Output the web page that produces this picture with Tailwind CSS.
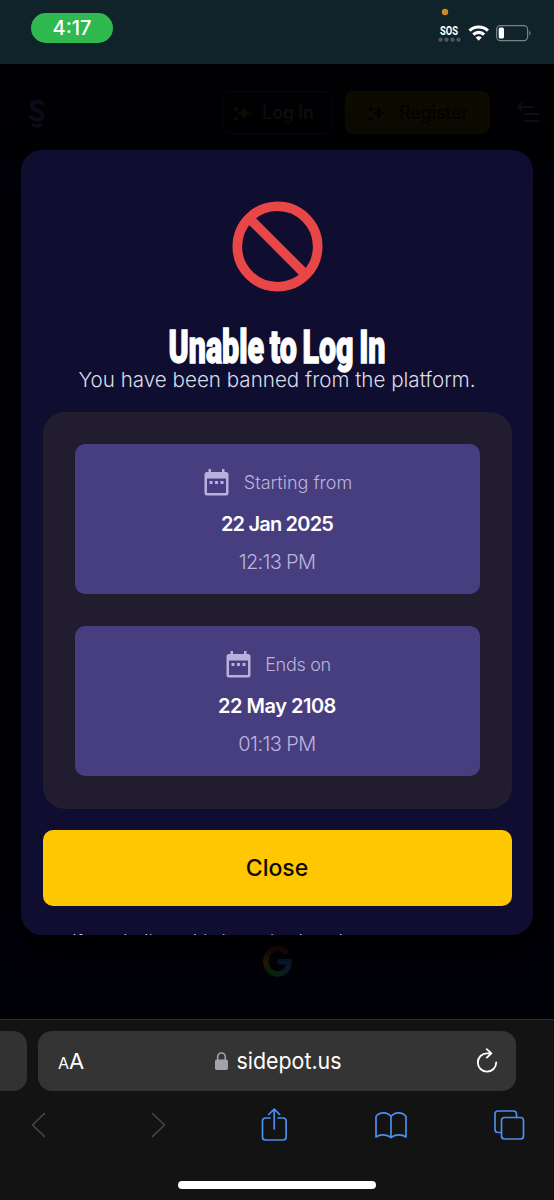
<!DOCTYPE html>
<html lang="en">
<head>
<meta charset="utf-8">
<title>Unable to Log In</title>
<script src="https://cdn.jsdelivr.net/npm/@tailwindcss/browser@4"></script>
</head>
<body class="bg-black font-['Inter',sans-serif]">
<div class="relative flex h-[1200px] w-[554px] flex-col overflow-hidden bg-[#010108]">

  <!-- Status bar -->
  <div class="flex h-16 shrink-0 items-start justify-between bg-[#11232a] pl-[31px] pr-[22px]">
    <div class="mt-[13px] flex h-[30px] w-[82px] items-center justify-center rounded-full bg-[#2fb94f] text-[20px] font-medium text-white">4:17</div>
    <svg class="mt-[6px] h-9 w-[95px]" viewBox="437 6 95 36" fill="none">
      <circle cx="445" cy="12" r="3.2" fill="#cf8a25"/>
      <text x="440" y="35" textLength="18" lengthAdjust="spacingAndGlyphs" font-family="Roboto, sans-serif" font-weight="700" font-size="12.5" fill="#fff">SOS</text>
      <g fill="#4b5a60"><circle cx="440.5" cy="39.7" r="2.1"/><circle cx="446.5" cy="39.7" r="2.1"/><circle cx="452.5" cy="39.7" r="2.1"/><circle cx="458.5" cy="39.7" r="2.1"/></g>
      <g stroke="#fff" stroke-width="3.2"><path d="M469.5 30.7a13.3 13.3 0 0 1 18.400 0"/><path d="M473.300 34.600a7.700 7.700 0 0 1 10.800 0"/></g>
      <path d="M478.700 40.800l-3-3.200a4.400 4.400 0 0 1 6 0z" fill="#fff"/>
      <rect x="496.600" y="25.600" width="31" height="15" rx="3.800" stroke="#76838a" stroke-width="1.200"/>
      <rect x="498.700" y="27.600" width="5.300" height="11" rx="1.700" fill="#fff"/>
      <path d="M529.300 30.700c1.800.8 1.800 4 0 4.800z" fill="#76838a"/>
    </svg>
  </div>

  <!-- Dimmed site header -->
  <div class="flex h-24 shrink-0 items-start bg-[#010103] pt-[27px] font-medium">
    <svg class="ml-[28px] mt-[6px] h-[32px] w-[18px]" viewBox="0 0 18 32" fill="none" stroke="#0c0b18" stroke-width="4"><path d="M15 8.500C14 3 4 3 4 8.500c0 6 10.500 4 10.500 10 0 6-10.500 6-11.500 0M4 27c3 2.500 7 2.500 10 0"/></svg>
    <div class="ml-[176px] flex h-[43px] w-[111px] items-center rounded-lg border border-[#090909] pl-[9px] text-[18px] tracking-[-0.2px] text-[#0e0e0d]">
      <svg class="mr-[10px] h-5 w-5" viewBox="0 0 20 20" fill="#0e0d02"><path d="M12 3l2 5 5 2-5 2-2 5-2-5-5-2 5-2zM4 3l1 2 2 1-2 1-1 2-1-2-2-1 2-1zM4 13l1 2 2 1-2 1-1 2-1-2-2-1 2-1z"/></svg>Log In
    </div>
    <div class="ml-[12px] flex h-[43px] w-[145px] items-center rounded-lg bg-[#0d0a00] pl-[22px] text-[18px] tracking-[-0.2px] text-[#020200]">
      <svg class="mr-[12px] h-5 w-5" viewBox="0 0 20 20" fill="#020200"><path d="M12 3l2 5 5 2-5 2-2 5-2-5-5-2 5-2zM4 3l1 2 2 1-2 1-1 2-1-2-2-1 2-1zM4 13l1 2 2 1-2 1-1 2-1-2-2-1 2-1z"/></svg>Register
    </div>
    <svg class="ml-[26px] mt-[10px] h-[24px] w-[24px]" viewBox="0 0 24 24" fill="none" stroke="#0e0e12" stroke-width="2"><path d="M2 6h16M6 2L2 6l4 4M8 13h15M8 20h15"/></svg>
  </div>

  <div class="flex flex-1 items-start justify-center">
    <svg class="mt-[786px] h-[31px] w-[29px]" viewBox="0 0 29 31" fill="none" stroke-width="5.600"><path d="M24 7.300A11.600 12.300 0 0 0 4 10" stroke="#2a100c"/><path d="M4.500 9.300a12 12.500 0 0 0 0 12.400" stroke="#2a2104"/><path d="M4 20.600a11.600 12.300 0 0 0 17.500 5" stroke="#0c2611"/><path d="M21 26a12 12 0 0 0 5-10.200H14.500" stroke="#0d1d33"/></svg>
  </div>

  <!-- Browser chrome -->
  <div class="flex h-[181px] shrink-0 flex-col border-t border-[#2b2b2c] bg-[#131313]">
    <div class="mt-[11px] flex h-[60px] shrink-0 gap-[11px]">
      <div class="w-[27px] rounded-r-[14px] bg-[#323233]"></div>
      <div class="flex w-[478px] items-center rounded-[14px] bg-[#343435] text-white">
        <div class="ml-[20px] flex w-[157px] items-baseline"><span class="text-[16px]">A</span><span class="text-[22px]">A</span></div>
        <svg class="h-[18px] w-[13px]" viewBox="0 0 13 18"><rect y="7.500" width="13" height="10.500" rx="1.800" fill="#a3a1ab"/><path d="M2.700 8V4.800a3.800 3.800 0 0 1 7.600 0V8" fill="none" stroke="#a3a1ab" stroke-width="1.600"/></svg>
        <svg class="ml-[8px] h-[30px] w-[110px]" viewBox="0 0 110 30"><text x="0.500" y="22.500" textLength="105" lengthAdjust="spacingAndGlyphs" font-size="22.500" fill="#fff">sidepot.us</text></svg>
        <svg class="ml-[130px] h-[26px] w-[22px]" viewBox="0 0 22 26" fill="none" stroke="#fff" stroke-width="1.800" stroke-linecap="round" stroke-linejoin="round"><path d="M20.200 14.500a9.200 9.200 0 1 1-9.200-9.200h4M10.800 1.200l4.600 4.200-4.600 4.200"/></svg>
      </div>
    </div>
    <svg class="h-[60px] w-[554px] shrink-0" viewBox="0 1091 554 60" fill="none" stroke-width="1.700" stroke-linecap="round" stroke-linejoin="round">
      <g stroke="#464646"><path d="M44.500 1113.500L32.500 1125l12 11.500M152.500 1113.500l12 11.500-12 11.500"/></g>
      <g stroke="#4a8ff0"><path d="M270 1118h-4.500a3 3 0 0 0-3 3v16a3 3 0 0 0 3 3h17.600a3 3 0 0 0 3-3v-16a3 3 0 0 0-3-3H278M274.200 1129v-19.500M268.700 1114.500l5.500-5.400 5.500 5.400"/>
      <path d="M391 1116.500c-4-5-11.500-4.500-15 0V1137c4-3 11-3 15 0.500 4-3.500 11-3.500 15-.5v-20.500c-3.500-4.500-11-5-15 0zV1137"/>
      <rect x="501.500" y="1117.500" width="22" height="21.500" rx="3"/><path d="M501.500 1132.500h-3.500a3 3 0 0 1-3-3V1114a3 3 0 0 1 3-3h15.500a3 3 0 0 1 3 3v3.500"/></g>
    </svg>
    <div class="mx-auto mt-[30px] h-[8px] w-[198px] shrink-0 rounded-full bg-white"></div>
  </div>

  <!-- Ban dialog, over the dimmed page -->
  <div class="absolute left-[21px] top-[150px] flex h-[785px] w-[512px] flex-col items-center overflow-hidden rounded-[21px] bg-[#0f0e30] px-[21px] shadow-[0_16px_40px_#000]">
    <svg class="mt-[51px] h-[91px] w-[91px] shrink-0" viewBox="0 0 91 91" fill="none" stroke="#e94648" stroke-width="9.600"><circle cx="45.500" cy="45.500" r="40.200"/><path d="M17 17l57 57"/></svg>
    <svg class="mt-[32px] h-[46px] w-[222px] shrink-0 overflow-visible" viewBox="166 324 222 46"><text x="168.500" y="362.500" textLength="217" lengthAdjust="spacingAndGlyphs" word-spacing="-3" font-family="Roboto, sans-serif" font-weight="900" font-size="46" fill="#fff" stroke="#fff" stroke-width="1.400" stroke-linejoin="miter">Unable to Log In</text></svg>
    <p class="-mt-[4px] text-center text-[20.600px] leading-[28px] font-light whitespace-nowrap text-[#dcdce8]">You have been banned from the platform.</p>
    <div class="mt-[18px] flex h-[397px] w-[469px] shrink-0 flex-col gap-8 rounded-[22px] bg-[#211c2e] p-8">
      <div class="flex h-[150px] flex-col items-center rounded-[10px] bg-[#473e80] pt-[23px] text-[#bdb4dc]">
        <div class="flex h-[30px] items-center gap-[15px] pl-[2px] text-[18px] font-light">
          <svg class="h-[27px] w-[25px]" viewBox="0 0 25 27"><path d="M4.500 0v3H3a2.500 2.500 0 0 0-2.500 2.500V24A2.500 2.500 0 0 0 3 26.500h19a2.500 2.500 0 0 0 2.500-2.500V5.500A2.500 2.500 0 0 0 22 3h-1.500V0h-2.500v3H7V0zM3 9.500h19V24H3z" fill="#b9b0db" fill-rule="evenodd"/><path d="M5.500 12h3v3h-3zM11 12h3v3h-3zM16.500 12h3v3h-3z" fill="#b9b0db"/></svg>
          <span>Starting from</span>
        </div>
        <div class="mt-[12px] text-[20px] leading-[30px] font-semibold tracking-[-0.8px] text-white">22 Jan 2025</div>
        <div class="mt-[8px] text-[20px] leading-[30px] font-light tracking-[-0.700px]">12:13 PM</div>
      </div>
      <div class="flex h-[150px] flex-col items-center rounded-[10px] bg-[#473e80] pt-[23px] text-[#bdb4dc]">
        <div class="flex h-[30px] items-center gap-[14px] pl-[3px] text-[18px] font-light tracking-[-0.300px]">
          <svg class="h-[27px] w-[25px]" viewBox="0 0 25 27"><path d="M4.500 0v3H3a2.500 2.500 0 0 0-2.500 2.500V24A2.500 2.500 0 0 0 3 26.500h19a2.500 2.500 0 0 0 2.500-2.500V5.500A2.500 2.500 0 0 0 22 3h-1.500V0h-2.500v3H7V0zM3 9.500h19V24H3z" fill="#b9b0db" fill-rule="evenodd"/><path d="M5.500 12h3v3h-3zM11 12h3v3h-3zM16.500 12h3v3h-3z" fill="#b9b0db"/></svg>
          <span>Ends on</span>
        </div>
        <div class="mt-[12px] text-[20px] leading-[30px] font-semibold tracking-[-0.500px] text-white">22 May 2108</div>
        <div class="mt-[8px] text-[20px] leading-[30px] font-light tracking-[-0.600px]">01:13 PM</div>
      </div>
    </div>
    <button class="mt-[21px] h-[76px] w-[469px] shrink-0 rounded-[10px] bg-[#ffc700] text-[23px] font-medium text-[#0d0b05]">Close</button>
    <p class="mt-[22px] ml-[30px] shrink-0 self-start text-[18px] leading-[28px] font-light tracking-[-0.100px] whitespace-nowrap text-[#dcdce8]">If you believe this is a mistake, please</p>
  </div>
</div>
</body>
</html>
